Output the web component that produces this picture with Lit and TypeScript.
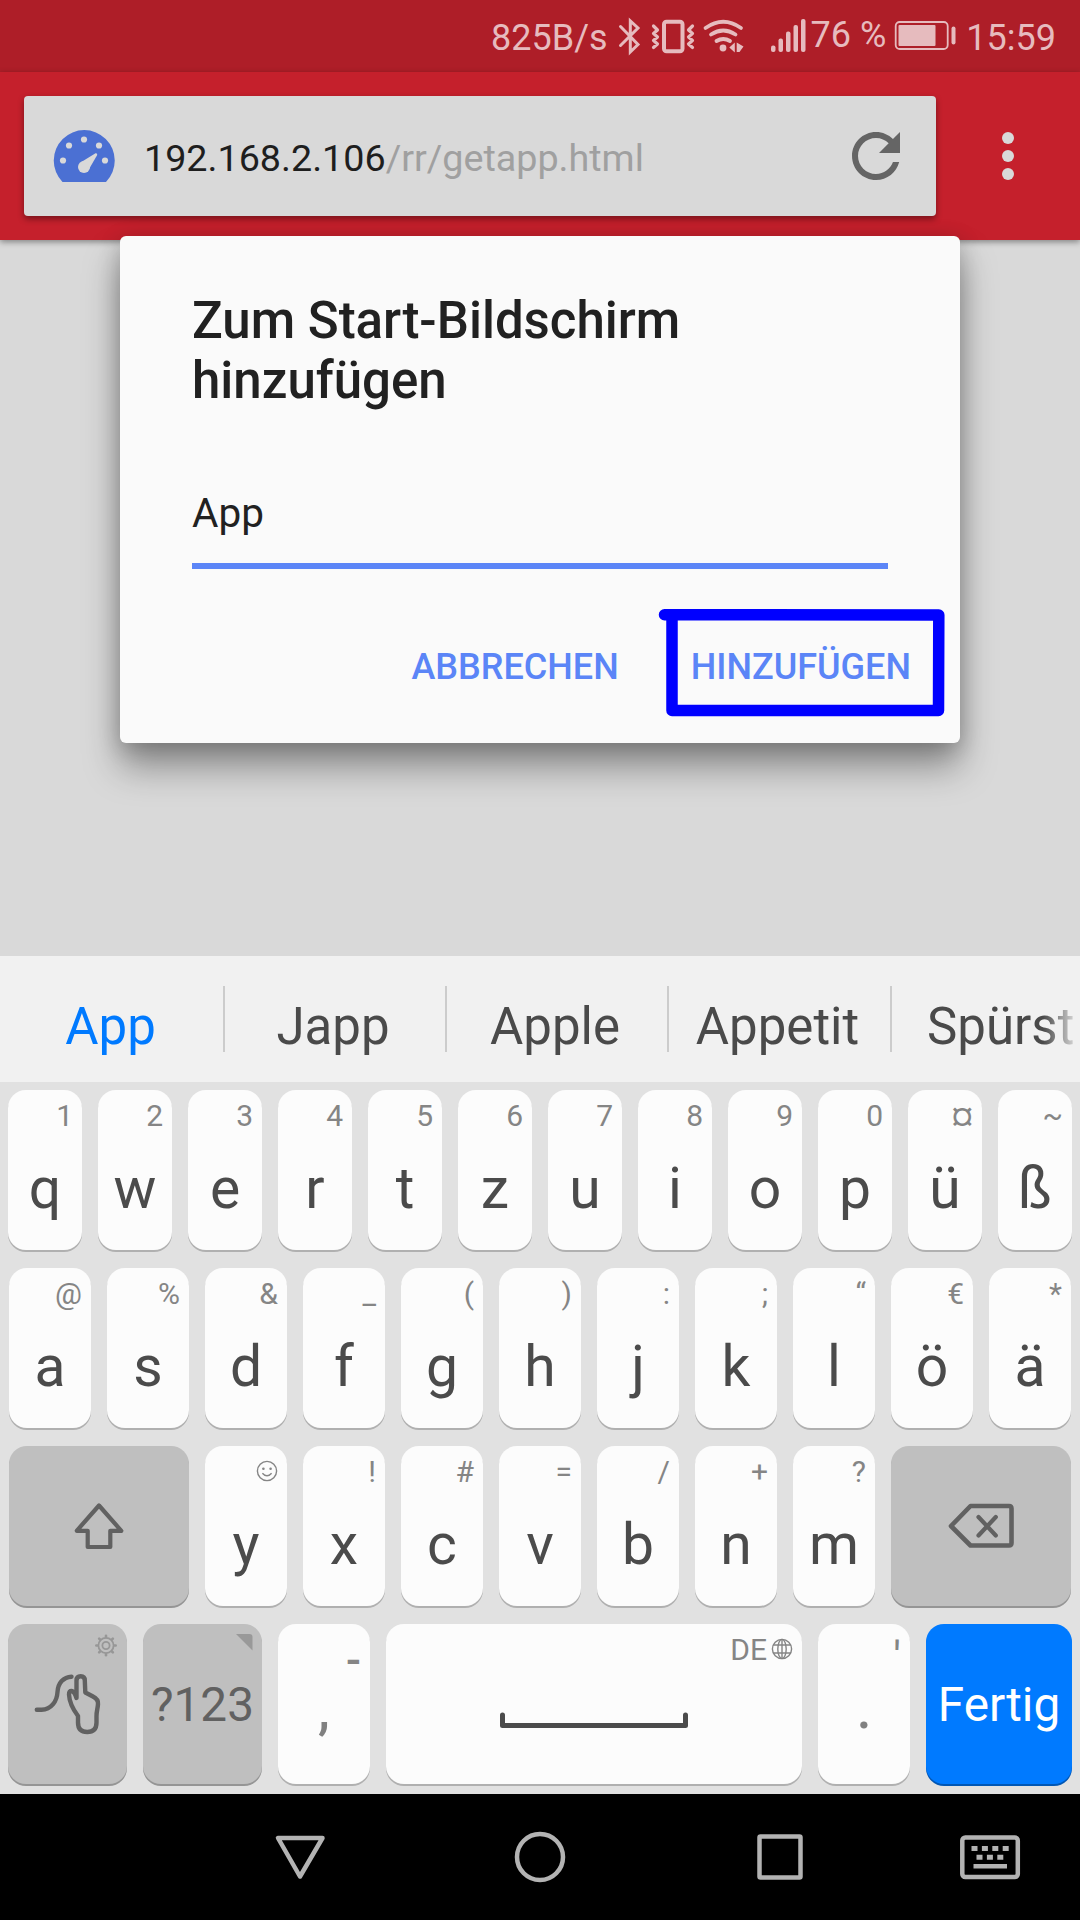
import { LitElement, html, css, svg, nothing } from "lit";
import { customElement, property } from "lit/decorators.js";
import { classMap } from "lit/directives/class-map.js";

type Key = { label: string; hint?: unknown };

const smiley = html`<svg class="hint-icon" width="22" height="22" viewBox="0 0 22 22">
  <g fill="none" stroke="#858585" stroke-width="1.4">
    <circle cx="11" cy="11" r="9.6" />
    <path d="M6.400 13.200Q11 18.400 15.600 13.200" />
  </g>
  <circle cx="7.4" cy="8.8" r="1.3" fill="#858585" />
  <circle cx="14.6" cy="8.8" r="1.3" fill="#858585" />
</svg>`;

const keys = (letters: string, hints: unknown[]): Key[] =>
  [...letters].map((label, i) => ({ label, hint: hints[i] }));

const ROW1 = keys("qwertzuiopüß", [..."1234567890¤~"]);
const ROW2 = keys("asdfghjklöä", [..."@%&_():;“€*"]);
const ROW3 = keys("yxcvbnm", [smiley, ..."!#=/+?"]);
const WORDS = ["App", "Japp", "Apple", "Appetit", "Spürst"];

@customElement("status-bar")
class StatusBar extends LitElement {
  static styles = css`
    :host { display: block; }
    .bar {
      box-sizing: border-box; height: 72px; padding-right: 24px; background: #ae1e28;
      display: flex; justify-content: flex-end; align-items: flex-start;
      font: 36px/42px Roboto, "Liberation Sans", sans-serif; color: #e6bbbe;
    }
    .text { padding-top: 17px; }
    .percent { padding-top: 14px; margin-right: 8px; }
    .icons { display: block; }
    .battery { display: block; margin-right: 8px; }
  `;
  render() {
    return html`<div class="bar">
      <span class="text">825B/s</span>
      <svg class="icons" width="203" height="72" viewBox="608 0 203 72">
        <g fill="none" stroke="#e6bbbe" stroke-linecap="round" stroke-linejoin="round">
          <path d="M620.500 26.500L638 44.500L630.300 52V21L638 28L620.500 45.500" stroke-width="3" stroke-linejoin="miter" />
          <rect x="664" y="21.800" width="18.500" height="29.500" rx="2.500" stroke-width="4" />
          <path d="M653.500 26l4 4-4 3.500 4 3.500-4 3.500 4 3.500-4 3.500M692.500 26l-4 4 4 3.500-4 3.500 4 3.500-4 3.500 4 3.500" stroke-width="3.200" />
          <path d="M705.500 28Q723.300 15.500 741 28M711 34.500Q723.300 26.500 735.500 34.500M716.500 41Q723.300 37 730 41" stroke-width="3.800" />
        </g>
        <g fill="#e6bbbe">
          <circle cx="723" cy="48" r="3.400" />
          <path d="M729.300 47.500L734.800 42.500V52.500ZM736.700 42.500L743.500 46.500L739.500 52H736.700Z" />
          <rect x="771" y="45.500" width="4.500" height="6.500" rx="2" />
          <rect x="778.500" y="38.500" width="4.500" height="13.500" rx="2" />
          <rect x="786" y="31.500" width="4.500" height="20.500" rx="2" />
          <rect x="793.500" y="25" width="4.500" height="27" rx="2" />
          <rect x="801" y="19" width="4.500" height="33" rx="2" />
        </g>
      </svg>
      <span class="percent">76 %</span>
      <svg class="battery" width="64" height="72" viewBox="895 0 64 72">
        <rect x="896.700" y="22" width="52" height="27" rx="4" fill="none" stroke="#e6bbbe" stroke-width="1.800" />
        <rect x="899.500" y="25" width="37" height="21" rx="1" fill="#e6bbbe" />
        <rect x="952.500" y="26.500" width="4" height="18" rx="2" fill="#e6bbbe" />
      </svg>
      <span class="text">15:59</span>
    </div>`;
  }
}

@customElement("browser-toolbar")
class BrowserToolbar extends LitElement {
  static styles = css`
    :host { display: block; position: relative; }
    .bar {
      box-sizing: border-box; height: 168px; padding: 24px 36px 24px 24px; background: #c5202c;
      display: flex; justify-content: space-between; align-items: center;
      box-shadow: 0 2px 6px rgba(0, 0, 0, 0.4);
    }
    .omnibox {
      box-sizing: border-box; width: 912px; height: 120px; padding: 0 24px 0 28px;
      display: flex; align-items: center; background: #d9d9d9; border-radius: 4px;
      box-shadow: 0 3px 6px rgba(0, 0, 0, 0.4);
    }
    .url {
      flex: 1; margin-left: 28px; padding-top: 4px; color: #1e1e1e;
      font: 37.700px/46px Roboto, "Liberation Sans", sans-serif;
    }
    .path { color: #a0a0a0; }
    svg { display: block; }
  `;
  render() {
    return html`<div class="bar">
      <div class="omnibox">
        <svg width="64" height="60" viewBox="52 126 64 60">
          <path d="M62.500 182A30.500 30.500 0 1 1 106 182Z" fill="#4b70d3" />
          <g fill="#d9d9d9">
            <circle cx="63" cy="160.500" r="3.100" /><circle cx="69" cy="145.500" r="3.100" />
            <circle cx="84" cy="139.500" r="3.100" /><circle cx="99" cy="145.500" r="3.100" />
            <circle cx="105" cy="160.500" r="3.100" /><circle cx="84" cy="167" r="6" />
            <path d="M80.500 162.500L95.500 153.300Q97.500 153 97.200 155L88.500 170Z" />
          </g>
        </svg>
        <div class="url">192.168.2.106<span class="path">/rr/getapp.html</span></div>
        <svg width="72" height="72" viewBox="0 0 24 24">
          <path fill="#656565" d="M17.650 6.350C16.200 4.900 14.210 4 12 4c-4.420 0-7.990 3.580-7.990 8s3.570 8 7.990 8c3.730 0 6.840-2.550 7.730-6h-2.080c-.820 2.330-3.040 4-5.650 4-3.310 0-6-2.690-6-6s2.690-6 6-6c1.660 0 3.140.690 4.220 1.780L13 11h7V4l-2.350 2.350z" />
        </svg>
      </div>
      <svg width="72" height="72" viewBox="0 0 24 24" fill="#d9d9d9">
        <circle cx="12" cy="6" r="2" /><circle cx="12" cy="12" r="2" /><circle cx="12" cy="18" r="2" />
      </svg>
    </div>`;
  }
}

@customElement("add-dialog")
class AddDialog extends LitElement {
  static styles = css`
    :host { display: block; }
    .dialog {
      position: relative; box-sizing: border-box; width: 840px; height: 507px; padding: 55px 72px 0;
      background: #fafafa; border-radius: 6px; color: #212121;
      box-shadow: 0 24px 36px rgba(0, 0, 0, 0.36), 0 4px 22px rgba(0, 0, 0, 0.2);
      font-family: Roboto, "Liberation Sans", sans-serif;
    }
    .title { margin: 0; width: 600px; font-size: 51px; line-height: 59.500px; font-weight: 500; }
    .field {
      box-sizing: border-box; width: 696px; height: 119px; margin-top: 40px; padding-top: 40px;
      font-size: 40.500px; line-height: 47px; border-bottom: 6px solid #5b85f7;
    }
    .actions {
      display: flex; justify-content: flex-end; gap: 72px; margin: 77px -23px 0 0;
      font-size: 36px; line-height: 42px; font-weight: 500; color: #5b85f7;
    }
    .marker { position: absolute; left: 536px; top: 370px; }
  `;
  render() {
    return html`<div class="dialog">
      <h1 class="title">Zum Start-Bildschirm hinzufügen</h1>
      <div class="field">App</div>
      <div class="actions"><span>ABBRECHEN</span><span>HINZUFÜGEN</span></div>
      <svg class="marker" width="296" height="114" viewBox="656 606 296 114">
        <path d="M664.500 614.800L938.800 615L938.500 710.500H672V617" fill="none" stroke="#0000ff" stroke-width="11.500"
          stroke-linecap="round" stroke-linejoin="round" />
      </svg>
    </div>`;
  }
}

@customElement("key-cap")
class KeyCap extends LitElement {
  @property() tone = "light";
  @property({ attribute: false }) hint: unknown;
  static styles = css`
    :host { display: block; height: 160px; }
    .cap {
      box-sizing: border-box; height: 160px; border-radius: 18px;
      display: flex; flex-direction: column; align-items: center;
      font: 57px/72px Roboto, "Liberation Sans", sans-serif;
      background: #fcfcfc; color: #4b4b4b; box-shadow: 0 2px 0 #b0b0b0;
    }
    .grey { background: #bfbfbf; color: #616161; box-shadow: 0 2px 0 #959595; }
    .blue { background: #007aff; color: #fff; box-shadow: 0 2px 0 #0056b4; }
    .hint {
      align-self: stretch; box-sizing: border-box; height: 63px; padding: 8px 9px 0 0;
      display: flex; justify-content: flex-end; align-items: flex-start;
      font-size: 30px; line-height: 35px; color: #858585;
    }
    .hint-icon { display: block; margin-top: 5.500px; }
    .globe { display: block; margin: 5.500px 0 0 4px; }
    .large { font-size: 44px; line-height: 52px; }
    .dash { font-weight: 500; padding: 2px 0 0; }
  `;
  render() {
    return html`<div class=${classMap({ cap: true, [this.tone]: true })}>
      <div class="hint">${this.hint ?? nothing}</div>
      <slot></slot>
    </div>`;
  }
}

@customElement("soft-keyboard")
class SoftKeyboard extends LitElement {
  static styles = css`
    :host { display: block; font-family: Roboto, "Liberation Sans", sans-serif; }
    .words {
      height: 126px; background: #f1f1f1; color: #4a4a4a; overflow: hidden;
      display: grid; grid-template-columns: 223px 222px 222px 223px 222px;
      font-size: 51px; line-height: 60px;
    }
    .word {
      box-sizing: border-box; height: 126px; padding: 15px 2px 0 0;
      display: flex; align-items: center; justify-content: center;
    }
    .word + .word { background: linear-gradient(#ccc, #ccc) 0 30px / 2px 66px no-repeat; }
    .word.active { color: #007aff; }
    .word.last { justify-content: flex-start; padding-left: 37px; }
    .fade {
      -webkit-mask-image: linear-gradient(90deg, #000 116px, transparent 154px);
      mask-image: linear-gradient(90deg, #000 116px, transparent 154px);
    }
    .rows {
      box-sizing: border-box; height: 712px; padding-top: 8px; background: #e1e1e1;
      display: flex; flex-direction: column; gap: 18px;
    }
    .row { display: grid; column-gap: 16px; justify-content: center; }
    .r1 { grid-template-columns: repeat(12, 74px); }
    .r2 { grid-template-columns: repeat(11, 82px); }
    .r3 { grid-template-columns: 180px repeat(7, 82px) 180px; }
    .r4 { grid-template-columns: 119px 119px 92px 416px 92px 146px; }
    svg { display: block; overflow: visible; }
    .small { font-size: 47.700px; line-height: 56px; margin-top: -10px; }
    .punct { color: #808080; font-size: 53px; font-weight: 500; line-height: 60px; margin-top: -7px; }
  `;
  row(list: Key[]) {
    return list.map((k) => html`<key-cap .hint=${k.hint}>${k.label}</key-cap>`);
  }
  render() {
    const gear = html`<svg width="24" height="26" viewBox="-12 -13.500 24 26" fill="none" stroke="#979797">
      <circle r="7.600" stroke-width="1.800" /><circle r="3.600" stroke-width="1.800" />
      ${[0, 45, 90, 135, 180, 225, 270, 315].map(
        (a) => svg`<path d="M0-8.500V-9.700" stroke-width="2.600" stroke-linecap="round" transform="rotate(${a})" />`
      )}
    </svg>`;
    const corner = html`<svg width="17" height="20" viewBox="0 -2 17 20">
      <path d="M0 0H13.500Q16.500 0 16.500 3V16.500Z" fill="#999" />
    </svg>`;
    const locale = html`DE<svg class="globe" width="22" height="22" viewBox="-11 -11 22 22" fill="none" stroke="#858585" stroke-width="1.400">
      <circle r="9.600" /><ellipse rx="4.200" ry="9.600" /><path d="M0-9.600V9.600M-8.800-4H8.800M-8.800 4H8.800" />
    </svg>`;
    return html`
      <div class="words">
        ${WORDS.map((w, i) => html`<div class=${classMap({ word: true, active: i === 0, last: i === 4 })}>
          <span class=${classMap({ fade: i === 4 })}>${w}</span>
        </div>`)}
      </div>
      <div class="rows">
        <div class="row r1">${this.row(ROW1)}</div>
        <div class="row r2">${this.row(ROW2)}</div>
        <div class="row r3">
          <key-cap tone="grey">
            <svg width="56" height="56" viewBox="71 1509 56 56">
              <path d="M99 1505.500L121.300 1530.800H110.300V1547H87.700V1530.800H76.700Z" fill="none" stroke="#616161" stroke-width="4.200" stroke-linejoin="round" />
            </svg>
          </key-cap>
          ${this.row(ROW3)}
          <key-cap tone="grey">
            <svg width="70" height="56" viewBox="946 1509 70 56">
              <g fill="none" stroke="#616161" stroke-width="4.600" stroke-linecap="round" stroke-linejoin="round">
                <path d="M951 1526L970.500 1506H1009Q1011.500 1506 1011.500 1508.500V1543Q1011.500 1545.500 1009 1545.500H970.500Z" />
                <path d="M978.500 1517L995.800 1535.500M995.800 1517L978.500 1535.500" stroke-width="4.200" />
              </g>
            </svg>
          </key-cap>
        </div>
        <div class="row r4">
          <key-cap tone="grey" .hint=${gear}>
            <svg width="72" height="50" viewBox="31.500 1687 72 50" fill="none" stroke="#616161" stroke-width="4.400" stroke-linejoin="round">
              <path d="M36.300 1709.700H41C51 1709.700 56.500 1701 57 1692C57.500 1683 63 1677 71 1676.700" stroke-linecap="round" />
              <path d="M76 1698L76 1680.500Q76 1676.200 80.200 1676.200Q84.300 1676.200 84.300 1680.500L84.800 1692.500L92 1696.300Q98 1699.300 97.500 1704C97.200 1709 96 1711 96 1716V1722.500Q96 1732 86.700 1732Q77.500 1732 77.500 1722.500V1716C73 1710 68.800 1702 68.500 1694.500Q68.500 1691 71 1691Q74 1691.500 76 1698Z" />
            </svg>
          </key-cap>
          <key-cap tone="grey" .hint=${corner}><span class="small">?123</span></key-cap>
          <key-cap .hint=${html`<span class="large dash">-</span>`}><span class="punct">,</span></key-cap>
          <key-cap .hint=${locale}>
            <svg width="190" height="50" viewBox="499 1687 190 50">
              <path d="M502.500 1715V1725.500H685.500V1715" fill="none" stroke="#4b4b4b" stroke-width="5" stroke-linecap="round" stroke-linejoin="round" />
            </svg>
          </key-cap>
          <key-cap .hint=${html`<span class="large">'</span>`}><span class="punct">.</span></key-cap>
          <key-cap tone="blue"><span class="small">Fertig</span></key-cap>
        </div>
      </div>`;
  }
}

@customElement("app-root")
class AppRoot extends LitElement {
  static styles = css`
    :host { display: block; width: 1080px; height: 1920px; overflow: hidden; }
    .screen { height: 1920px; background: #d9d9d9; display: flex; flex-direction: column; }
    .page { height: 716px; display: flex; justify-content: center; align-items: flex-start; }
    .page add-dialog { margin-top: -4px; position: relative; }
    .nav { height: 126px; background: #000; }
    svg { display: block; }
  `;
  render() {
    return html`<div class="screen">
      <status-bar></status-bar>
      <browser-toolbar></browser-toolbar>
      <div class="page"><add-dialog></add-dialog></div>
      <soft-keyboard></soft-keyboard>
      <div class="nav">
        <svg width="1080" height="126" viewBox="0 1794 1080 126" fill="none" stroke="#b3b3b3" stroke-width="4.500" stroke-linejoin="round">
          <path d="M278 1838H322.500L300 1876.500Z" />
          <circle cx="540" cy="1857" r="23" />
          <rect x="759.500" y="1836.500" width="41" height="41" rx="1" />
          <rect x="962.300" y="1837.500" width="55.500" height="39.500" rx="3" />
          <path d="M971.500 1848.500H1011" stroke-width="5" stroke-dasharray="6 4.400" />
          <path d="M976.500 1857.300H1005" stroke-width="5" stroke-dasharray="6 4.400" />
          <path d="M973.500 1866.300H1007" stroke-width="4.500" />
        </svg>
      </div>
    </div>`;
  }
}
